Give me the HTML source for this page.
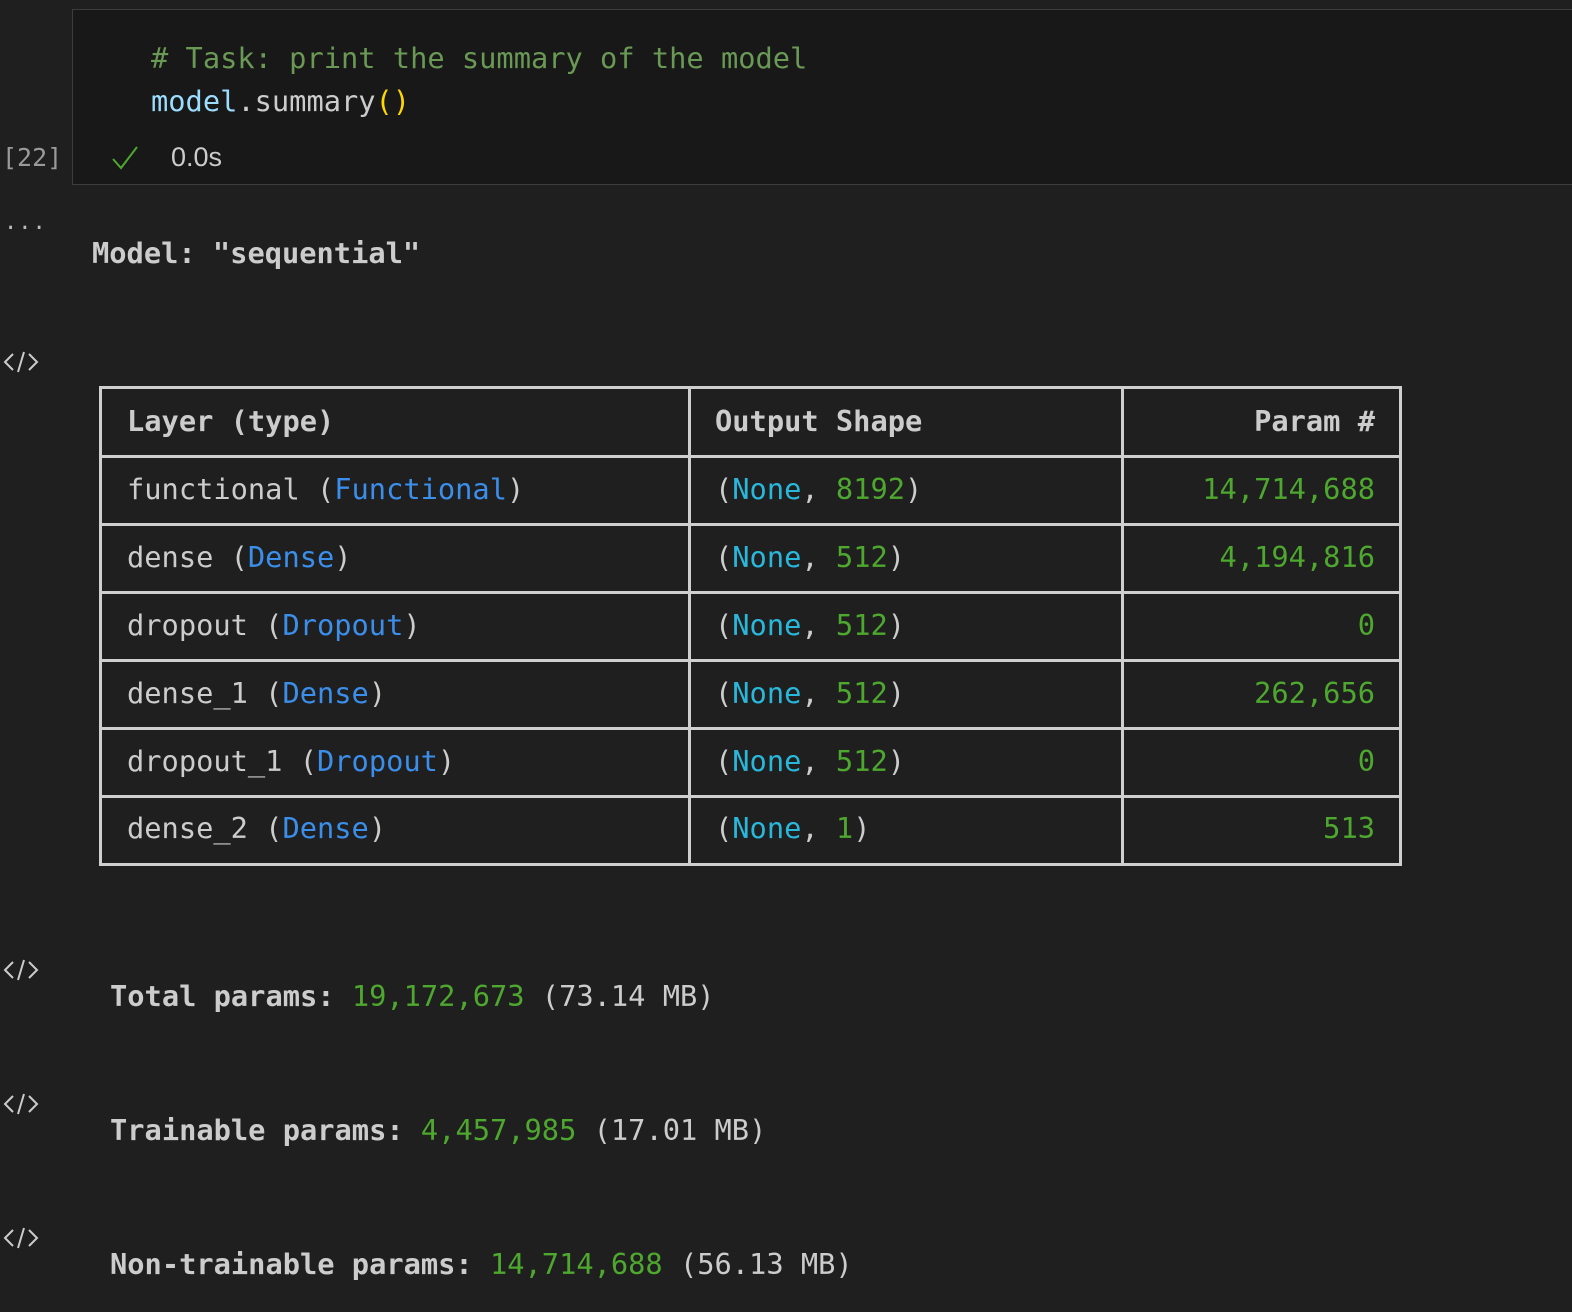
<!DOCTYPE html>
<html><head><style>
html,body{margin:0;padding:0;background:#1f1f1f;width:1572px;height:1312px;overflow:hidden;}
body{position:relative;font-family:"DejaVu Sans Mono","Liberation Mono",monospace;color:#cccccc;}
.t{position:absolute;white-space:pre;font-size:28.7px;line-height:40px;}
.b{font-weight:bold;}
.cm{color:#6a9955}.v{color:#9cdcfe}.y{color:#ffd700}
.bl{color:#3b8eea}.cy{color:#29b8db}.g{color:#4ea72e}
.cell{position:absolute;left:72px;top:9px;width:1520px;height:174px;background:#181818;border:1px solid #3c3c3c;}
.tb{position:absolute;left:99px;top:386px;width:1297px;height:474px;border:3px solid #cfcfcf;}
.h{position:absolute;left:0;width:100%;height:3px;background:#cfcfcf;}
.vl{position:absolute;top:0;width:3px;height:100%;background:#cfcfcf;}
.ic{position:absolute;left:3px;}
</style></head><body>
<div class="cell"></div>
<div class="t" style="left:151px;top:38px"><span class="cm"># Task: print the summary of the model</span></div>
<div class="t" style="left:151px;top:81px"><span class="v">model</span>.summary<span class="y">()</span></div>
<div class="t" style="left:2px;top:138px;font-size:25px;color:#9a9a9a">[22]</div>
<svg style="position:absolute;left:110px;top:144px" width="30" height="28" viewBox="0 0 30 28"><path d="M3 15 L11 24 L27 3" fill="none" stroke="#4ea72e" stroke-width="2"/></svg>
<div style="position:absolute;left:171px;top:142px;font-size:27px;font-family:'Liberation Sans',sans-serif;color:#cccccc">0.0s</div>
<div style="position:absolute;left:4px;top:210px;font-size:22px;color:#bbb;letter-spacing:1px">...</div>
<div class="t b" style="left:92px;top:233px">Model: "sequential"</div>
<svg class="ic" style="top:350px" width="36" height="24" viewBox="0 0 36 24"><path d="M10 4 L2 12 L10 20 M26 4 L34 12 L26 20 M21 2 L15 22" fill="none" stroke="#cccccc" stroke-width="2"/></svg>
<div class="tb">
<div class="h" style="top:66px"></div>
<div class="h" style="top:134px"></div>
<div class="h" style="top:202px"></div>
<div class="h" style="top:270px"></div>
<div class="h" style="top:338px"></div>
<div class="h" style="top:406px"></div>
<div class="vl" style="left:586px"></div>
<div class="vl" style="left:1019px"></div>
</div>
<div class="t b" style="left:127px;top:401px">Layer (type)</div>
<div class="t b" style="left:715px;top:401px">Output Shape</div>
<div class="t b" style="right:197px;top:401px">Param #</div>

<div class="t" style="left:127px;top:469px">functional (<span class="bl">Functional</span>)</div>
<div class="t" style="left:715px;top:469px">(<span class="cy">None</span>, <span class="g">8192</span>)</div>
<div class="t g" style="right:197px;top:469px">14,714,688</div>

<div class="t" style="left:127px;top:537px">dense (<span class="bl">Dense</span>)</div>
<div class="t" style="left:715px;top:537px">(<span class="cy">None</span>, <span class="g">512</span>)</div>
<div class="t g" style="right:197px;top:537px">4,194,816</div>

<div class="t" style="left:127px;top:605px">dropout (<span class="bl">Dropout</span>)</div>
<div class="t" style="left:715px;top:605px">(<span class="cy">None</span>, <span class="g">512</span>)</div>
<div class="t g" style="right:197px;top:605px">0</div>

<div class="t" style="left:127px;top:673px">dense_1 (<span class="bl">Dense</span>)</div>
<div class="t" style="left:715px;top:673px">(<span class="cy">None</span>, <span class="g">512</span>)</div>
<div class="t g" style="right:197px;top:673px">262,656</div>

<div class="t" style="left:127px;top:741px">dropout_1 (<span class="bl">Dropout</span>)</div>
<div class="t" style="left:715px;top:741px">(<span class="cy">None</span>, <span class="g">512</span>)</div>
<div class="t g" style="right:197px;top:741px">0</div>

<div class="t" style="left:127px;top:808px">dense_2 (<span class="bl">Dense</span>)</div>
<div class="t" style="left:715px;top:808px">(<span class="cy">None</span>, <span class="g">1</span>)</div>
<div class="t g" style="right:197px;top:808px">513</div>

<svg class="ic" style="top:958px" width="36" height="24" viewBox="0 0 36 24"><path d="M10 4 L2 12 L10 20 M26 4 L34 12 L26 20 M21 2 L15 22" fill="none" stroke="#cccccc" stroke-width="2"/></svg>
<div class="t" style="left:110px;top:976px"><span class="b">Total params:</span> <span class="g">19,172,673</span> (73.14 MB)</div>
<svg class="ic" style="top:1092px" width="36" height="24" viewBox="0 0 36 24"><path d="M10 4 L2 12 L10 20 M26 4 L34 12 L26 20 M21 2 L15 22" fill="none" stroke="#cccccc" stroke-width="2"/></svg>
<div class="t" style="left:110px;top:1110px"><span class="b">Trainable params:</span> <span class="g">4,457,985</span> (17.01 MB)</div>
<svg class="ic" style="top:1226px" width="36" height="24" viewBox="0 0 36 24"><path d="M10 4 L2 12 L10 20 M26 4 L34 12 L26 20 M21 2 L15 22" fill="none" stroke="#cccccc" stroke-width="2"/></svg>
<div class="t" style="left:110px;top:1244px"><span class="b">Non-trainable params:</span> <span class="g">14,714,688</span> (56.13 MB)</div>
</body></html>
